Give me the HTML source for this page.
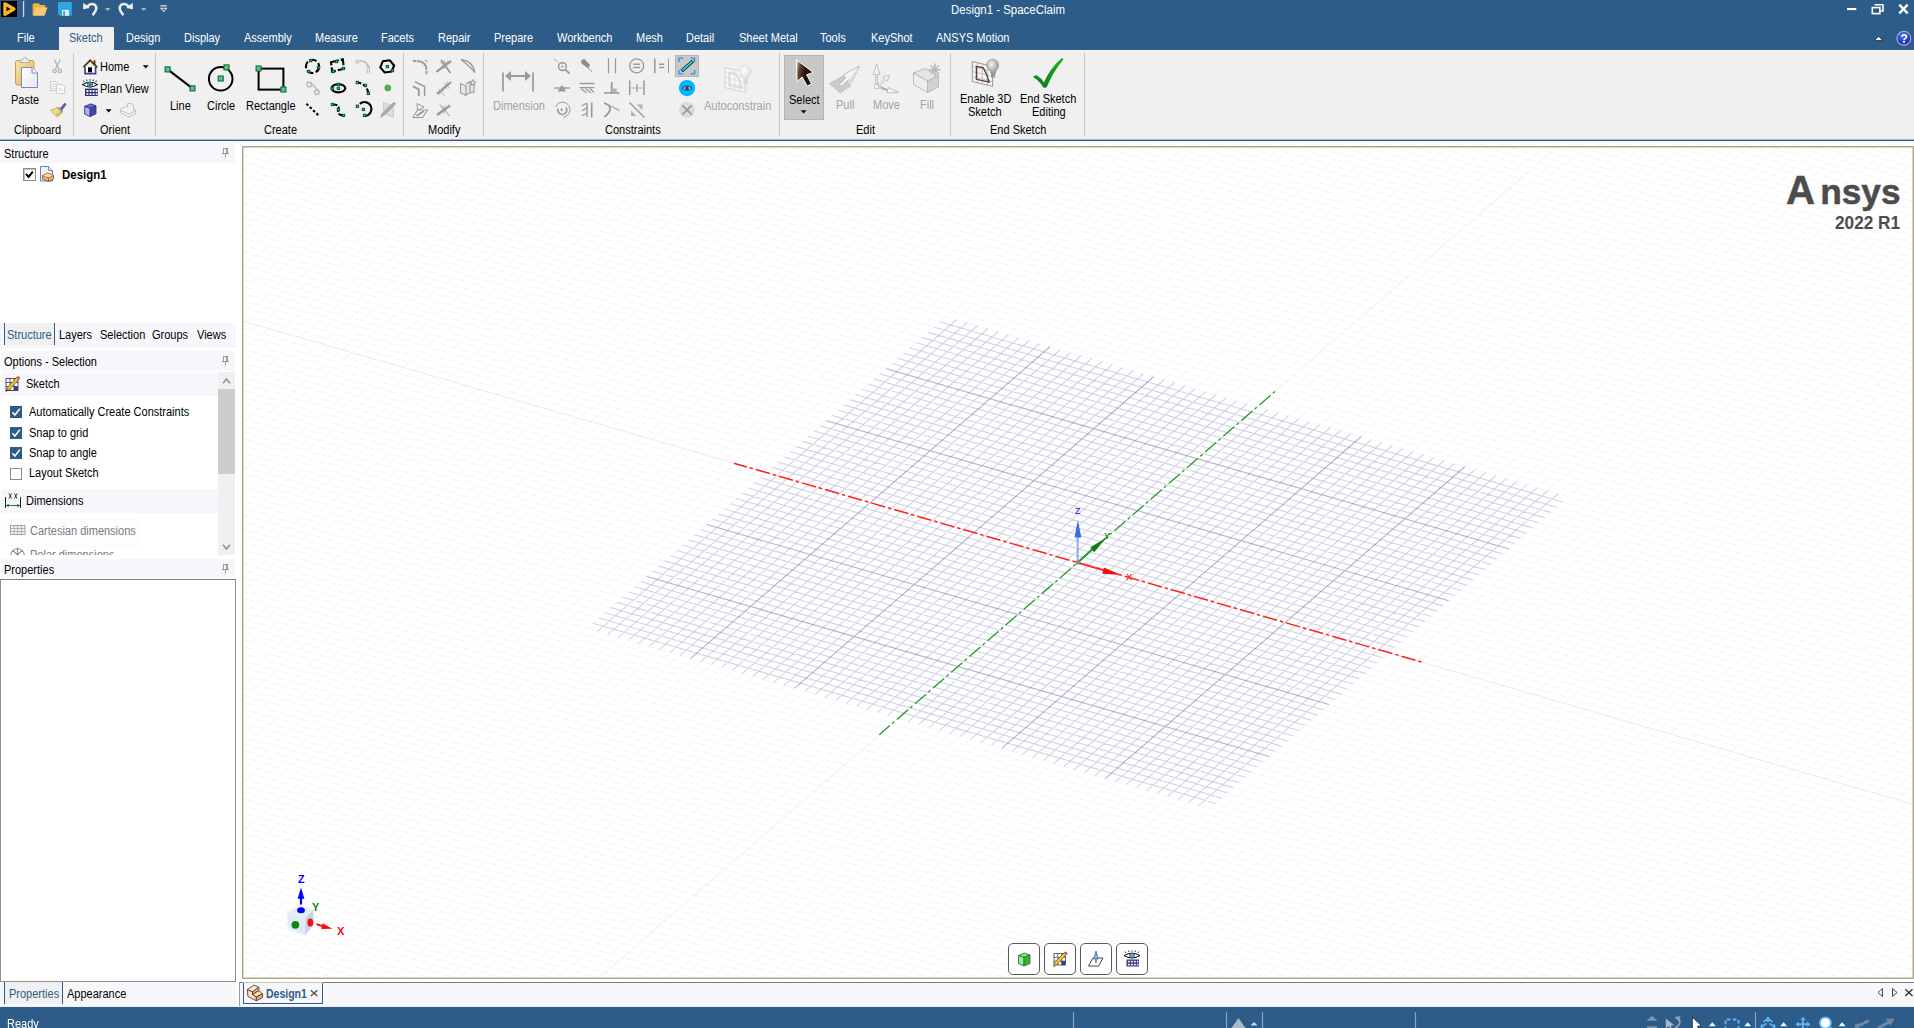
<!DOCTYPE html>
<html lang="en"><head><meta charset="utf-8"><title>Design1 - SpaceClaim</title>
<style>
html,body{margin:0;padding:0;}
body{width:1914px;height:1028px;overflow:hidden;position:relative;background:#fff;font-family:"Liberation Sans",sans-serif;font-size:12px;color:#000;}
.a{position:absolute;}
.t{position:absolute;white-space:nowrap;font-size:12px;line-height:14px;height:14px;transform:scaleX(.917);transform-origin:0 0;}
.w{color:#fff;}
.g{color:#a3a3a3;}
.bl{color:#2D5C88;}
.b{font-weight:bold;}
svg{position:absolute;overflow:visible;}
.sep{position:absolute;width:1px;background:#c6c6c6;top:53px;height:83px;}
.hd{position:absolute;background:#f7f7fb;}
.cb{position:absolute;width:11px;height:11px;border:1px solid #8a8a8a;background:#fff;}
.cbc{position:absolute;width:13px;height:13px;background:#2D5C88;}
.logo::first-letter{font-size:40.500px;letter-spacing:5.200px;}
</style></head>
<body>
<!-- titlebar -->
<div class="a" style="left:0px;top:0px;width:1914px;height:50px;background:#2D5C88;"></div>
<div class="a" style="left:59px;top:27px;width:55px;height:23px;background:#f0f0f0;"></div>
<div class="t w" style="left:951px;top:3px;transform:scaleX(0.955);font-size:12px;">Design1 - SpaceClaim</div>
<div class="t w" style="left:17px;top:31px;">File</div>
<div class="t bl" style="left:69px;top:31px;">Sketch</div>
<div class="t w" style="left:126px;top:31px;">Design</div>
<div class="t w" style="left:184px;top:31px;">Display</div>
<div class="t w" style="left:244px;top:31px;">Assembly</div>
<div class="t w" style="left:315px;top:31px;">Measure</div>
<div class="t w" style="left:381px;top:31px;">Facets</div>
<div class="t w" style="left:438px;top:31px;">Repair</div>
<div class="t w" style="left:494px;top:31px;">Prepare</div>
<div class="t w" style="left:557px;top:31px;">Workbench</div>
<div class="t w" style="left:636px;top:31px;">Mesh</div>
<div class="t w" style="left:686px;top:31px;">Detail</div>
<div class="t w" style="left:739px;top:31px;">Sheet Metal</div>
<div class="t w" style="left:820px;top:31px;">Tools</div>
<div class="t w" style="left:871px;top:31px;">KeyShot</div>
<div class="t w" style="left:936px;top:31px;">ANSYS Motion</div>
<svg style="left:0px;top:0px" width="200" height="20" viewBox="0 0 200 20">
<rect x="1" y="1" width="16" height="16" fill="#000"/>
<path d="M4.900 3.800 L13.900 9 L4.900 14.200 Z" fill="#000" stroke="#F9B61E" stroke-width="3.300" stroke-linejoin="round"/>
<rect x="22.900" y="1" width="1.300" height="16" fill="#d2dae3"/>
<path d="M32.600 15.500 V5 q0-1.800 1.800-1.800 h3.600 q1 0 1.500 0.800 l0.700 1 h4.300 q0.900 0 0.900 0.900 V8.500 H36 Z" fill="#F6AE3E"/>
<path d="M32.800 15.700 L35.600 7.600 H47.400 L44.600 15.700 Z" fill="#FCCB70"/>
<path d="M58 2.100 H71.800 V15.700 H59.800 L58 13.900 Z" fill="#2AA9E2"/>
<rect x="62" y="9.900" width="7" height="5.800" fill="#e9eef2"/>
<rect x="63.200" y="11.200" width="1.800" height="4.500" fill="#1f9fdc"/>
<path d="M86.800 6.900 Q90.500 2.700 94.600 4.600 Q98.800 8.200 92.600 15.200" fill="none" stroke="#ECECEC" stroke-width="2.500"/>
<path d="M83.400 2.700 L83 9.300 L89.900 8 Z" fill="#ECECEC"/>
<path d="M105 8 H110.400 L107.700 11 Z" fill="#A9B4C0"/>
<path d="M129.200 6.900 Q125.500 2.700 121.400 4.600 Q117.200 8.200 123.400 15.200" fill="none" stroke="#ECECEC" stroke-width="2.500"/>
<path d="M132.600 2.700 L133 9.300 L126.100 8 Z" fill="#ECECEC"/>
<path d="M141 8 H146.400 L143.700 11 Z" fill="#A9B4C0"/>
<rect x="160.600" y="5.200" width="6.200" height="1.300" fill="#DADFE6"/>
<path d="M161 8.300 H166.400 L163.700 11.500 Z" fill="#1d3b58" stroke="#DADFE6" stroke-width="1.100"/>
</svg>
<svg style="left:0px;top:0px" width="1914" height="50" viewBox="0 0 1914 50">
<rect x="1847" y="8" width="9.300" height="2.100" fill="#fff"/>
<path d="M1874.5 4.8 H1883 V11 H1880.4" fill="none" stroke="#fff" stroke-width="1.6"/>
<rect x="1872.3" y="7.6" width="7.6" height="6" fill="none" stroke="#fff" stroke-width="1.6"/>
<path d="M1899.3 4.6 L1907.7 13.4 M1907.7 4.6 L1899.3 13.4" stroke="#fff" stroke-width="2.3" fill="none"/>
<path d="M1874.4 40.6 L1878.6 36.2 L1882.8 40.6 Z" fill="#fff" stroke="#3a3a3a" stroke-width="1" stroke-linejoin="round"/>
<defs><radialGradient id="hg" cx="0.4" cy="0.3" r="0.8"><stop offset="0" stop-color="#5a7be8"/><stop offset="0.6" stop-color="#1d3cc0"/><stop offset="1" stop-color="#0a1c80"/></radialGradient></defs>
<circle cx="1903.800" cy="38.200" r="6.900" fill="url(#hg)" stroke="#a9b9d6" stroke-width="1.100"/>
</svg>
<div class="t w b" style="left:1900.6px;top:32px;transform:scaleX(1);font-size:12px;">?</div>
<!-- ribbon -->
<div class="a" style="left:0px;top:50px;width:1914px;height:90px;background:#f0f0f0;"></div>
<div class="a" style="left:0px;top:50px;width:1914px;height:1px;background:#f8f6f5;"></div>
<div class="a" style="left:59px;top:50px;width:55px;height:1px;background:#f0f0f0;"></div>
<div class="a" style="left:0px;top:139px;width:1914px;height:1px;background:#a9b9cb;"></div>
<div class="a" style="left:0px;top:140px;width:1914px;height:1px;background:#2D5C88;"></div>
<div class="a" style="left:0px;top:141px;width:1914px;height:2px;background:#f6f6fb;"></div>
<div class="sep" style="left:73px"></div>
<div class="sep" style="left:155px"></div>
<div class="sep" style="left:403px"></div>
<div class="sep" style="left:483px"></div>
<div class="sep" style="left:779px"></div>
<div class="sep" style="left:950px"></div>
<div class="sep" style="left:1084px"></div>
<div class="a" style="left:784px;top:55px;width:40px;height:65px;background:#c8c8c8;box-sizing:border-box;border:1px solid #b4b4b4;"></div>
<div class="a" style="left:675px;top:55px;width:24px;height:22px;background:#c8c8c8;box-sizing:border-box;border:1px solid #b4b4b4;"></div>
<svg style="left:0px;top:0px" width="1914" height="145" viewBox="0 0 1914 145"><defs>
<linearGradient id="cbg" x1="0" y1="0" x2="1" y2="1"><stop offset="0" stop-color="#f9e3a8"/><stop offset="1" stop-color="#e7b35c"/></linearGradient>
<linearGradient id="pgg" x1="0" y1="0" x2="1" y2="1"><stop offset="0" stop-color="#ffffff"/><stop offset="1" stop-color="#e3e6f6"/></linearGradient>
<linearGradient id="ckg" x1="0" y1="0" x2="0" y2="1"><stop offset="0" stop-color="#22b422"/><stop offset="1" stop-color="#0f7a1c"/></linearGradient>
<linearGradient id="arg" x1="0" y1="0" x2="1" y2="0.3"><stop offset="0" stop-color="#fff"/><stop offset="0.25" stop-color="#6a4a3c"/><stop offset="0.6" stop-color="#2a1208"/></linearGradient>
<radialGradient id="bulb" cx="0.4" cy="0.35" r="0.7"><stop offset="0" stop-color="#f4f4f4"/><stop offset="1" stop-color="#8a8a8a"/></radialGradient>
<radialGradient id="bulbg" cx="0.4" cy="0.35" r="0.7"><stop offset="0" stop-color="#ffffff"/><stop offset="1" stop-color="#d8d8d8"/></radialGradient>
</defs>
<rect x="15.5" y="60.5" width="18.5" height="24.5" rx="2" fill="url(#cbg)" stroke="#cf9a4e"/>
<path d="M20 62.5 V60 h2.6 q0.3-2.6 2.2-2.6 q1.9 0 2.2 2.6 H29.6 V62.5 Z" fill="#efefef" stroke="#a9a9a9" stroke-width="0.9"/>
<path d="M21.5 67.5 H32 L37.5 73 V87.5 H21.5 Z" fill="url(#pgg)" stroke="#7d8cb4" stroke-width="1"/>
<path d="M32 67.5 V73 H37.5" fill="#f4f5fb" stroke="#7d8cb4" stroke-width="1"/>
<g fill="none" stroke="#b4b4b4" stroke-width="1.3"><path d="M54.3 59.5 L59.2 69.5 M60.2 59.5 L55.3 69.5"/><circle cx="54.6" cy="71" r="1.7"/><circle cx="59.9" cy="71" r="1.7"/></g>
<g stroke="#cfcfcf" stroke-width="1" fill="#f4f4f4"><path d="M50.5 81.5 H56 L58.5 84 V90.5 H50.5 Z"/><path d="M56.5 84.5 H62 L64.5 87 V93.5 H56.5 Z" fill="#fafafa"/></g>
<path d="M52 84.5h4 M52 86.500h5 M52 88.5h4 M58 88.500h4 M58 90.500h5" stroke="#d6d6d6" stroke-width="0.8"/>
<path d="M60.2 108.6 L64.4 103.4 Q65.8 102.8 66 104.6 L62 110 Z" fill="#5c5cb4" stroke="#3c3c90" stroke-width="0.6"/>
<path d="M57 107.5 L60.4 108.2 L62.4 110.6 L62 113 Z" fill="#9a9a9a" stroke="#666" stroke-width="0.6"/>
<path d="M50.4 110.4 L57.2 107.6 L62 113 L57.4 116.8 Q53 113.6 50.4 110.4 Z" fill="#eadf86" stroke="#b7a64a" stroke-width="0.7"/>
<path d="M55 114.5 L57.4 116.8 L62 113 L60 111.4 Z" fill="#c9b85a" opacity="0.7"/>
<rect x="93.6" y="60.3" width="1.8" height="4.4" fill="#7c1212"/>
<path d="M85 67 V73.6 H95.6 V67" fill="#fff" stroke="#3e3ea0" stroke-width="1.7"/>
<rect x="88" y="67.3" width="4" height="5" fill="#000"/>
<path d="M83.4 67.2 L90.2 60.4 L97.2 67.4" fill="none" stroke="#45450f" stroke-width="1.9" stroke-linejoin="miter"/>
<path d="M142.8 65.2 H148.6 L145.7 68.4 Z" fill="#000"/>
<path d="M82.6 84.6 Q90 79.8 97.4 84.6 Q90 89.4 82.6 84.6 Z" fill="#fff" stroke="#000" stroke-width="1.1"/>
<circle cx="90" cy="84.6" r="2.5" fill="#5fb4c8" stroke="#1e5a6e" stroke-width="0.9"/><circle cx="90" cy="84.600" r="0.9" fill="#103040"/>
<path d="M84.4 82 L83.4 80.6 M87 81 L86.6 79.6 M90 80.600 V79.2 M93 81 L93.400 79.6 M95.6 82 L96.6 80.6" stroke="#000" stroke-width="0.9"/>
<rect x="85" y="88.600" width="12.8" height="7.4" fill="#2f2f72"/>
<path d="M86.4 90 h2v2h-2z m3.1 0 h2v2h-2z m3.1 0 h2v2h-2z m3.1 0 h1.600v2h-1.600z M86.4 93.200 h2v1.800h-2z m3.1 0 h2v1.800h-2z m3.1 0 h2v1.800h-2z m3.1 0 h1.600v1.800h-1.600z" fill="#eef"/>
<path d="M84.6 106.4 L90.8 103.800 L96 105.800 L90.2 108.4 Z" fill="#6a6acc" stroke="#2a2a80" stroke-width="0.8"/>
<path d="M84.600 106.4 L90.2 108.4 V116.600 L84.600 114 Z" fill="#b0b0f4" stroke="#2a2a80" stroke-width="0.8"/>
<path d="M90.200 108.4 L96 105.800 V113.800 L90.200 116.600 Z" fill="#4545a8" stroke="#2a2a80" stroke-width="0.8"/>
<path d="M105.800 109.200 H111.600 L108.700 112.400 Z" fill="#000"/>
<g fill="#f2f2f2" stroke="#c2c2c2" stroke-width="1"><path d="M120.500 109 L127 106 L135.500 110 V114 L129 117 L120.500 113 Z"/><path d="M127.500 107.500 V103.500 H131 L133.500 105.500 V110.500"/><path d="M120.500 110.500 L129 114 L135.500 111"/></g>
<path d="M167.600 69.400 L192.500 88.400" stroke="#000" stroke-width="2"/><rect x="165.1" y="66.9" width="5" height="5" fill="#5fc184" stroke="#0b6a3c" stroke-width="1.1"/><rect x="190.0" y="85.9" width="5" height="5" fill="#5fc184" stroke="#0b6a3c" stroke-width="1.1"/>
<circle cx="220.700" cy="78.800" r="11.800" fill="none" stroke="#000" stroke-width="2"/><rect x="224.0" y="64.9" width="5" height="5" fill="#5fc184" stroke="#0b6a3c" stroke-width="1.1"/><rect x="218.2" y="76.0" width="5" height="5" fill="#5fc184" stroke="#0b6a3c" stroke-width="1.1"/>
<rect x="258.600" y="68.600" width="24.800" height="21" fill="none" stroke="#000" stroke-width="2"/><rect x="256.1" y="66.0" width="5" height="5" fill="#5fc184" stroke="#0b6a3c" stroke-width="1.1"/><rect x="280.9" y="87.0" width="5" height="5" fill="#5fc184" stroke="#0b6a3c" stroke-width="1.1"/>
<circle cx="312.500" cy="66.400" r="6.600" fill="none" stroke="#000" stroke-width="2.100" stroke-dasharray="7 2.400"/><rect x="309.55" y="59.45" width="2.300" height="2.300" fill="#4fb878" stroke="#0b5a30" stroke-width="1"/><rect x="317.45" y="66.45" width="2.300" height="2.300" fill="#4fb878" stroke="#0b5a30" stroke-width="1"/><rect x="307.45" y="70.35" width="2.300" height="2.300" fill="#4fb878" stroke="#0b5a30" stroke-width="1"/>
<path d="M331 62.200 L342.800 59.400 L344 68.800 L332.200 71.600 Z" fill="none" stroke="#000" stroke-width="2.100" stroke-dasharray="8 2"/><rect x="335.35" y="60.35" width="2.300" height="2.300" fill="#4fb878" stroke="#0b5a30" stroke-width="1"/><rect x="342.35" y="67.35" width="2.300" height="2.300" fill="#4fb878" stroke="#0b5a30" stroke-width="1"/><rect x="332.25" y="70.35" width="2.300" height="2.300" fill="#4fb878" stroke="#0b5a30" stroke-width="1"/>
<g fill="none" stroke="#b9b9b9"><rect x="356" y="60.300" width="2.600" height="2.600" stroke-width="0.9"/><path d="M359.500 61 Q368 60.600 368.200 68" stroke-width="1.700"/><path d="M367.200 68.500 V73 M369.400 66.500 V73" stroke-width="1" /></g>
<polygon points="394.1,65.5 391.5,71.6 384.6,72.5 380.3,67.3 382.9,61.2 389.8,60.3" fill="none" stroke="#000" stroke-width="2.100"/><rect x="386.25" y="65.45" width="2.300" height="2.300" fill="#4fb878" stroke="#0b5a30" stroke-width="1"/><rect x="391.35" y="69.35" width="2.300" height="2.300" fill="#4fb878" stroke="#0b5a30" stroke-width="1"/>
<g fill="none" stroke="#b9b9b9" stroke-width="1.500"><circle cx="309.200" cy="84.600" r="2.300"/><circle cx="316.800" cy="92.300" r="2.300"/><path d="M310.800 83 L318.300 90.500"/></g>
<ellipse cx="338.400" cy="88.300" rx="6.900" ry="4.100" fill="none" stroke="#000" stroke-width="2.100"/><rect x="337.25" y="83.25" width="2.300" height="2.300" fill="#4fb878" stroke="#0b5a30" stroke-width="1"/><rect x="331.25" y="87.25" width="2.300" height="2.300" fill="#4fb878" stroke="#0b5a30" stroke-width="1"/><rect x="337.25" y="87.25" width="2.300" height="2.300" fill="#4fb878" stroke="#0b5a30" stroke-width="1"/>
<path d="M357.400 82.500 Q366.500 83.500 368.400 93.400" fill="none" stroke="#000" stroke-width="2.100" stroke-dasharray="4 1.800"/><rect x="356.25" y="81.35" width="2.300" height="2.300" fill="#4fb878" stroke="#0b5a30" stroke-width="1"/><rect x="364.35" y="84.25" width="2.300" height="2.300" fill="#4fb878" stroke="#0b5a30" stroke-width="1"/><rect x="367.25" y="92.25" width="2.300" height="2.300" fill="#4fb878" stroke="#0b5a30" stroke-width="1"/>
<circle cx="387.800" cy="87.900" r="2.900" fill="#55b848" stroke="#2e8a2e" stroke-width="0.8"/>
<path d="M306.400 103.800 L319.200 116" stroke="#000" stroke-width="2.100" stroke-dasharray="2.600 2" fill="none"/>
<path d="M332.400 104.500 Q340 104 338.400 109.600 Q337 115.400 343.500 115.400" fill="none" stroke="#000" stroke-width="2.100" stroke-dasharray="5 1.800"/><rect x="331.25" y="103.35" width="2.300" height="2.300" fill="#4fb878" stroke="#0b5a30" stroke-width="1"/><rect x="337.25" y="108.45" width="2.300" height="2.300" fill="#4fb878" stroke="#0b5a30" stroke-width="1"/><rect x="342.35" y="114.25" width="2.300" height="2.300" fill="#4fb878" stroke="#0b5a30" stroke-width="1"/>
<path d="M359.800 103.900 A7 7 0 1 1 365.600 116" fill="none" stroke="#000" stroke-width="2.100"/><rect x="356.25" y="105.15" width="2.300" height="2.300" fill="#4fb878" stroke="#0b5a30" stroke-width="1"/><rect x="362.25" y="108.25" width="2.300" height="2.300" fill="#4fb878" stroke="#0b5a30" stroke-width="1"/><rect x="363.35" y="114.25" width="2.300" height="2.300" fill="#4fb878" stroke="#0b5a30" stroke-width="1"/>
<path d="M383.500 102.500 L393.500 106 V117.500 L383.500 113.500 Z" fill="#dcdcdc" stroke="#c4c4c4" stroke-width="0.8"/>
<path d="M380.500 117.300 L382.200 113.200 L393.300 102.600 Q395.200 102 395.600 104 L384.600 115 Z" fill="#ababab" stroke="#9a9a9a" stroke-width="0.6"/>
<g fill="none" stroke="#9a9a9a">
<path d="M413 61 H416.300" stroke-width="2"/><path d="M417 61 Q426.400 61.300 426.400 70" stroke-width="1.800"/><path d="M426.400 71 V74.300" stroke-width="2"/><path d="M424.500 60.500 L427 60.500 L427 63" stroke-width="0.700"/>
<path d="M436.500 71.800 L451 61" stroke-width="2.300"/><path d="M441 60 L450.500 73" stroke-width="1.900"/><path d="M440.500 62.500 L447.500 67.500 M444.500 60.500 L444 69 M448 61.500 L441.500 66.500" stroke-width="0.800"/>
<path d="M461 59.500 Q473 61 475 72.500 M461 59.500 Q470 66.500 475 72.500" stroke-width="1.400"/>
<path d="M415 81.800 L424.600 86.500 V96" stroke-width="1.500"/><path d="M413 86.300 L418.800 89.300 V96" stroke-width="1.900"/>
<path d="M437 94 L451 82" stroke-width="2.100"/><path d="M438.500 89 L444.500 95.500 M444 83 L450 88.500 M447.500 81.500 L446 89 M439.500 94.500 L442.500 87.500 M443 86.500 L449.500 85 M438 91.500 L444 90.500" stroke-width="0.800"/>
<path d="M460.500 83.500 L466 86 V95.500 L460.500 93 Z M466 84 L470 81.500 V92.500 L466 95 M470 84 L474 82.500 V92 L470 93" stroke-width="1.100" fill="#e6e6e6"/>
<path d="M473 79.500 l0.900 2 2.100 0.300 -1.600 1.400 0.400 2.100 -1.800 -1.100 -1.800 1.100 0.400 -2.100 -1.600 -1.400 2.100 -0.300z" stroke-width="0.900" fill="#ddd"/>
<path d="M413 117.500 L417.500 110 L427.500 110 L422.500 117.500 Z" stroke-width="1.100" fill="#f6f6f6"/><path d="M417 103.500 L424 107 L417.500 110.500 Z" stroke-width="1"/><path d="M416.500 115.800 L424 111" stroke-width="2"/>
<path d="M437 115 L450 105.500" stroke-width="2.400"/><path d="M440 104.500 L449.500 116" stroke-width="1"/><path d="M441 107 L447 112.500 M444.500 105.500 L443.500 114 M447.500 107 L440.500 112" stroke-width="0.700"/>
</g>
<g stroke="#9a9a9a" fill="#9a9a9a"><path d="M503 72.600 V91.600 M533 72.600 V91.600" stroke-width="1.700"/><path d="M508 76 H528" stroke-width="2"/><path d="M505 76 L511 71 V81 Z M531 76 L525 71 V81 Z" stroke="none"/></g>
<g fill="none" stroke="#9a9a9a" stroke-width="1.500">
<circle cx="562.400" cy="66.600" r="3.900"/><path d="M565.300 69.600 L569.500 73.500" stroke-width="1.800"/><path d="M554.300 58.500 L558 62.300" stroke-width="0.9"/><path d="M560.700 66.600 h3.400 M562.400 64.900 v3.400" stroke-width="0.6"/>
<path d="M580.500 61 L584 58.800 L590.200 65 L588 68.500 Z" fill="#8e8e8e" stroke="none"/><path d="M581.500 62.500 L588.500 67.500" stroke-width="1.600" stroke="#8e8e8e"/><path d="M587 67 L592 71.500" stroke-width="1"/>
<path d="M608.500 58.200 V73.500 M615.500 58.200 V73.500" stroke-width="1.300"/>
<circle cx="636.700" cy="65.800" r="7"  stroke-width="1.300"/><path d="M633.200 64.200 h7 M633.200 67.600 h7" stroke-width="1.500"/>
<path d="M654.800 58.400 V73.200" stroke-width="1.600"/><path d="M668.500 58.400 V73.200" stroke-width="1"/><path d="M659 64.200 h5.200 M659 67.600 h5.200" stroke-width="1.500"/>
<path d="M554 88 H570" stroke-width="1.400"/><path d="M557.500 91.400 L562 84.800 L566 91.400 Z" fill="#9a9a9a" stroke="none"/>
<path d="M579.500 83.500 H594.500 M579.500 87.600 H594.500" stroke-width="1.300"/><path d="M581 88.500 L586.500 93 M585.500 88.500 L591 93 M590 88.500 L594 92.500" stroke-width="1.200"/>
<path d="M604 93 H619.500" stroke-width="1.600"/><path d="M611.700 82 V93" stroke-width="1.800"/><rect x="612.700" y="88.500" width="4" height="4" fill="#b4b4b4" stroke="none"/>
<path d="M629.700 80.500 V95 M644 80.500 V95" stroke-width="1.500"/><path d="M636.900 84.500 V91.500" stroke-width="1.500"/><path d="M631.500 88 h4 M638.500 88 h4" stroke-width="0.8"/>
<path d="M555.500 107 A7.500 7.500 0 1 1 563 117.200" stroke-width="1"/><path d="M558 108.500 A4.500 4.500 0 1 0 566 107.500" stroke-width="1.600"/><circle cx="561.700" cy="109.800" r="0.500"/>
<path d="M591.700 102.500 V117.500" stroke-width="1.600"/><path d="M587 103.500 V117" stroke-width="1.400"/><path d="M582 105.800 L587 103 M582 110.800 L587 108 M582 115.800 L587 113" stroke-width="1.300"/>
<path d="M604 103 Q616 107 604.500 117" stroke-width="1.800"/><path d="M605 103.200 L619.500 110.500" stroke-width="1.100"/>
<path d="M629.500 102.500 L644.500 117.500" stroke-width="1.400"/><path d="M636.500 104.500 H642.500 V110 Z M631 110.500 V116 H636.500 Z" fill="#b0b0b0" stroke="none"/>
</g>
<path d="M681.700 70.900 L692.900 60.900" stroke="#223" stroke-width="3.400" stroke-linecap="butt"/><path d="M682.300 70.400 L692.300 61.400" stroke="#18e0e0" stroke-width="1.800"/>
<path d="M679 62 V58.200 H683 M690.600 58.200 H694.600 V62 M694.600 70 V73.800 H690.600 M683 73.800 H679 V70" fill="none" stroke="#2196e8" stroke-width="1.300"/>
<circle cx="687" cy="88.100" r="8.100" fill="#00b6ff"/><path d="M682 88.200 Q687 84.200 692 88.200 Q687 92.200 682 88.200 Z" fill="#9adfff" stroke="#243c4c" stroke-width="1"/><circle cx="687" cy="88.200" r="1.700" fill="#243c4c"/>
<circle cx="687" cy="110" r="8.100" fill="#dcdcdc"/><path d="M682.300 105.300 L691.700 114.700 M691.700 105.300 L682.300 114.700" stroke="#9a9a9a" stroke-width="1.700"/>
<g transform="translate(724.5,65)"><path d="M0.500 2.500 L20.800 7.400 V27.300 L0.500 22.600 Z" fill="#f6f6f6" stroke="#cdcdcd" stroke-width="0.9"/>
<path d="M5.500 3.700 V23.800 M10.500 4.900 V24.900 M15.500 6.100 V26.100 M0.500 7.500 L20.800 12.400 M0.500 12.500 L20.800 17.400 M0.500 17.500 L20.800 22.400" stroke="#cdcdcd" stroke-width="0.500" fill="none"/>
<path d="M4.600 7.400 L11.500 8.900 Q15 15 17.500 23.200 L4.600 20.300 Z" fill="none" stroke="#d6d6d6" stroke-width="1.300"/>
<path d="M14.800 6.500 a6 6 0 1 1 10.400 3.800 q-1.600 2 -1.800 4.500 h-4.200 q-0.200 -2.600 -2 -4.600 a6 6 0 0 1 -2.400 -3.700z" fill="url(#bulbg)" stroke="#d4d4d4" stroke-width="0.600"/>
<rect x="19.200" y="15" width="4.200" height="3.600" fill="#d4d4d4" opacity="0.8"/></g>
<g transform="translate(971.8,59)"><path d="M0.500 2.500 L20.800 7.400 V27.300 L0.500 22.600 Z" fill="#f6f6f6" stroke="#8e8e8e" stroke-width="0.9"/>
<path d="M5.500 3.700 V23.800 M10.500 4.900 V24.900 M15.500 6.100 V26.100 M0.500 7.500 L20.800 12.400 M0.500 12.500 L20.800 17.400 M0.500 17.500 L20.800 22.400" stroke="#8e8e8e" stroke-width="0.500" fill="none"/>
<path d="M4.600 7.400 L11.500 8.900 Q15 15 17.500 23.200 L4.600 20.300 Z" fill="none" stroke="#5a3a2a" stroke-width="1.300"/>
<path d="M14.800 6.500 a6 6 0 1 1 10.400 3.800 q-1.600 2 -1.800 4.500 h-4.200 q-0.200 -2.600 -2 -4.600 a6 6 0 0 1 -2.400 -3.700z" fill="url(#bulb)" stroke="#8a8a8a" stroke-width="0.600"/>
<rect x="19.200" y="15" width="4.200" height="3.600" fill="#8a8a8a" opacity="0.8"/></g>
<path d="M796.200 59.600 L813.300 72.400 L806.700 74.700 L811.500 83.800 L807.300 86.200 L802.200 77 L797.100 81.500 Z" fill="url(#arg)" stroke="#fff" stroke-width="1" stroke-linejoin="round"/>
<path d="M800.700 110.200 H806.500 L803.600 113.400 Z" fill="#000"/>
<path d="M829.500 83.500 L843 76 L851 85.500 L840 93 Z" fill="#cacaca" stroke="#bcbcbc" stroke-width="0.700"/>
<path d="M859.500 66 L851.500 82.500 L848.500 79.800 L841.500 86.500 L839.500 84.500 L846 77.500 L843 75 Z" fill="#f4f4f4" stroke="#b8b8b8" stroke-width="0.900" stroke-linejoin="round"/><path d="M859.500 66 L851.500 82.500 L848.500 79.800 Z" fill="#d8d8d8" opacity="0.7"/>
<g fill="#f4f4f4" stroke="#b8b8b8" stroke-width="0.900"><path d="M875.800 84 V74.500 h-2.600 L876.600 64 L880 74.500 h-2.600 V84 Z"/><path d="M878 85 L884.500 78.500 l-1.600 -1.500 L889.500 75 L887 81.500 l-1.500 -1.600 L879.300 86.500 Z"/><path d="M879 86 L888 89.500 l0.600 -2 L898.500 92.500 L887 93 l0.600 -2 L878.500 88 Z"/><circle cx="876.500" cy="86.500" r="2.300"/></g><path d="M880.500 87.200 L888 90.300" stroke="#a8a8a8" stroke-width="1.200"/>
<g stroke="#b4b4b4" stroke-width="0.900"><path d="M913.500 73 L925 68.500 L938.500 75.500 L927.500 81 Z" fill="#e4e4e4"/><path d="M913.500 73 L927.500 81 V92.500 L913.500 84.500 Z" fill="#eeeeee"/><path d="M927.500 81 L938.500 75.500 V87 L927.500 92.500 Z" fill="#d2d2d2"/></g>
<path d="M934.800 63.500 V76 M928.800 69.800 H940.800 M930.500 65.500 L939 74 M939 65.500 L930.500 74" stroke="#b9b9b9" stroke-width="1.600"/>
<path d="M1033 77 Q1035 74.500 1037.500 75.800 Q1041.500 78.500 1044 82.500 Q1050 68 1061.500 58.200 Q1063.500 57.600 1063.200 59.800 Q1053 72 1047 86.500 Q1045.500 88.500 1043.500 87.400 Q1039 80.500 1033 77 Z" fill="url(#ckg)"/></svg>
<div class="t" style="left:14px;top:123px;">Clipboard</div>
<div class="t" style="left:100px;top:123px;">Orient</div>
<div class="t" style="left:264px;top:123px;">Create</div>
<div class="t" style="left:428px;top:123px;">Modify</div>
<div class="t" style="left:605px;top:123px;">Constraints</div>
<div class="t" style="left:856px;top:123px;">Edit</div>
<div class="t" style="left:990px;top:123px;">End Sketch</div>
<div class="t" style="left:11px;top:93px;">Paste</div>
<div class="t" style="left:100px;top:60px;">Home</div>
<div class="t" style="left:100px;top:82px;">Plan View</div>
<div class="t" style="left:170px;top:99px;">Line</div>
<div class="t" style="left:207px;top:99px;">Circle</div>
<div class="t" style="left:246px;top:99px;">Rectangle</div>
<div class="t g" style="left:492.5px;top:99px;">Dimension</div>
<div class="t g" style="left:704px;top:99px;">Autoconstrain</div>
<div class="t" style="left:789px;top:93px;">Select</div>
<div class="t g" style="left:835.5px;top:98px;">Pull</div>
<div class="t g" style="left:873px;top:98px;">Move</div>
<div class="t g" style="left:919.5px;top:98px;">Fill</div>
<div class="t" style="left:960px;top:92px;">Enable 3D</div>
<div class="t" style="left:968px;top:105px;">Sketch</div>
<div class="t" style="left:1020px;top:92px;">End Sketch</div>
<div class="t" style="left:1032px;top:105px;">Editing</div>
<!-- left -->
<div class="a" style="left:1px;top:143px;width:234px;height:20px;background:#f7f7fb;"></div>
<div class="t" style="left:4px;top:147px;">Structure</div>
<div class="a" style="left:23px;top:168px;width:13px;height:13px;background:#fff;box-sizing:border-box;border:1px solid #8c8c8c;box-shadow:inset 1px 1px 0 #c4c4c4;"></div>
<div class="t b" style="left:61.5px;top:168px;transform:scaleX(0.955);">Design1</div>
<div class="a" style="left:0px;top:323px;width:236px;height:25px;background:#f7f7fb;"></div>
<div class="a" style="left:4px;top:323px;width:51px;height:22px;background:#f0f0f0;box-sizing:border-box;border-left:1px solid #2D5C88;border-right:1px solid #2D5C88;"></div>
<div class="t bl" style="left:7px;top:328px;">Structure</div>
<div class="t" style="left:59px;top:328px;">Layers</div>
<div class="t" style="left:100px;top:328px;">Selection</div>
<div class="t" style="left:152px;top:328px;">Groups</div>
<div class="t" style="left:197px;top:328px;">Views</div>
<div class="a" style="left:1px;top:351px;width:234px;height:20px;background:#f7f7fb;"></div>
<div class="t" style="left:4px;top:355px;">Options - Selection</div>
<div class="a" style="left:1px;top:372px;width:217px;height:24px;background:#f7f7fb;"></div>
<div class="t" style="left:26px;top:377px;">Sketch</div>
<div class="a" style="left:218px;top:372px;width:17px;height:183px;background:#f0f0f0;"></div>
<div class="a" style="left:218px;top:389px;width:17px;height:85px;background:#cdcdcd;"></div>
<div class="a" style="left:10px;top:406px;width:12px;height:12px;background:#2D5C88;"></div>
<div class="t" style="left:29px;top:405px;">Automatically Create Constraints</div>
<div class="a" style="left:10px;top:427px;width:12px;height:12px;background:#2D5C88;"></div>
<div class="t" style="left:29px;top:425.5px;">Snap to grid</div>
<div class="a" style="left:10px;top:447px;width:12px;height:12px;background:#2D5C88;"></div>
<div class="t" style="left:29px;top:445.5px;">Snap to angle</div>
<div class="a" style="left:10px;top:467.5px;width:12px;height:12px;background:#fff;box-sizing:border-box;border:1px solid #8a8a8a;"></div>
<div class="t" style="left:29px;top:466px;">Layout Sketch</div>
<div class="a" style="left:1px;top:489px;width:217px;height:24px;background:#f7f7fb;"></div>
<div class="t" style="left:26px;top:494px;">Dimensions</div>
<div class="a" style="left:7px;top:518px;width:132px;height:30px;background:#fdfdff;"></div>
<div class="t" style="left:30px;top:524px;color:#7a7a7a;">Cartesian dimensions</div>
<div class="a" style="left:0;top:540px;width:218px;height:15px;overflow:hidden;"><div class="t" style="left:30px;top:7.500px;color:#7a7a7a;">Polar dimensions</div></div>
<div class="a" style="left:1px;top:559px;width:234px;height:19px;background:#f7f7fb;"></div>
<div class="t" style="left:4px;top:563px;">Properties</div>
<div class="a" style="left:0px;top:579px;width:236px;height:403px;background:#fff;box-sizing:border-box;border:1px solid #8e8e8e;border-top-color:#7a7a7a;"></div>
<div class="a" style="left:0px;top:982px;width:236px;height:25px;background:#f7f7fb;"></div>
<div class="a" style="left:4px;top:982px;width:59px;height:22px;background:#f0f0f0;box-sizing:border-box;border-left:1px solid #2D5C88;border-right:1px solid #2D5C88;"></div>
<div class="t bl" style="left:8.5px;top:987px;">Properties</div>
<div class="t" style="left:67px;top:987px;">Appearance</div>
<div class="a" style="left:239px;top:982px;width:1px;height:24px;background:#9a9a9a;"></div>
<svg style="left:0px;top:0px" width="240" height="1010" viewBox="0 0 240 1010"><rect x="223" y="148" width="1" height="5" fill="#9a9a9a"/><rect x="223" y="148" width="5" height="1" fill="#9a9a9a"/><rect x="226" y="148" width="2" height="5" fill="#9a9a9a"/><rect x="222" y="153" width="7" height="1" fill="#9a9a9a"/><rect x="225" y="154" width="1" height="3" fill="#9a9a9a"/>
<rect x="223" y="356" width="1" height="5" fill="#9a9a9a"/><rect x="223" y="356" width="5" height="1" fill="#9a9a9a"/><rect x="226" y="356" width="2" height="5" fill="#9a9a9a"/><rect x="222" y="361" width="7" height="1" fill="#9a9a9a"/><rect x="225" y="362" width="1" height="3" fill="#9a9a9a"/>
<rect x="223" y="564" width="1" height="5" fill="#9a9a9a"/><rect x="223" y="564" width="5" height="1" fill="#9a9a9a"/><rect x="226" y="564" width="2" height="5" fill="#9a9a9a"/><rect x="222" y="569" width="7" height="1" fill="#9a9a9a"/><rect x="225" y="570" width="1" height="3" fill="#9a9a9a"/>
<path d="M26 174 L28.600 176.900 L32.800 171.600" fill="none" stroke="#000" stroke-width="2"/>
<path d="M40.500 166.500 H48.500 L52.500 170.500 V181 H40.500 Z" fill="#f1f1ec" stroke="#6b7fae" stroke-width="1"/><path d="M48.500 166.500 V170.500 H52.500" fill="#e8ecf6" stroke="#6b7fae" stroke-width="0.9"/>
<path d="M42.500 175.500 L47.500 173 L53.500 175.500 V179 L48.500 181.500 L42.500 179 Z" fill="#e9b77c" stroke="#8a4a1a" stroke-width="0.8"/><path d="M42.500 175.500 L48.500 178 L53.500 175.500 M48.500 178 V181.500" fill="none" stroke="#8a4a1a" stroke-width="0.8"/><path d="M43 175.600 L47.500 173.500 L53 175.600 L48.500 177.600Z" fill="#f6d9b0"/>
<path d="M12.400 412.2 L14.900 415 L19.800 408.8" fill="none" stroke="#fff" stroke-width="1.500"/>
<path d="M12.400 433.2 L14.900 436 L19.800 429.8" fill="none" stroke="#fff" stroke-width="1.500"/>
<path d="M12.400 453.2 L14.900 456 L19.800 449.8" fill="none" stroke="#fff" stroke-width="1.500"/>
<rect x="6" y="378.500" width="12" height="12" fill="#fff" stroke="#3a3a6a" stroke-width="0.9"/><path d="M10 378.500 v12 M14 378.500 v12 M6 382.500 h12 M6 386.500 h12" stroke="#3a3a6a" stroke-width="0.800"/><rect x="14" y="386.500" width="4" height="4" fill="#3a3a8a"/>
<path d="M6 391.500 L7.500 387.500 L17 377 Q19 376 19.800 378.200 L10 389 Z" fill="#f2c62a" stroke="#5a4a10" stroke-width="0.700"/><path d="M17 377 Q19 376 19.800 378.200 L18.600 379.500 L16 377.800 Z" fill="#e05a5a"/><path d="M6 391.500 L6.800 389.300 L8.200 390.500 Z" fill="#222"/>
<path d="M5.500 497 V508 M20.500 497 V508" stroke="#222" stroke-width="1"/><path d="M6 505.500 H20" stroke="#2a7a2a" stroke-width="1"/><path d="M5.800 505.500 l3 -1.800 v3.600z M20.200 505.500 l-3 -1.800 v3.600z" fill="#2a7a2a"/>
<path d="M9 493.500 l2.500 5 M11.500 493.500 l-2.500 5 M14.500 493.500 l2.500 5 M17 493.500 l-2.500 5" stroke="#222" stroke-width="0.900"/>
<rect x="10.500" y="525.500" width="14.500" height="9" fill="#f4f4f4" stroke="#9a9a9a" stroke-width="0.9"/><path d="M14.100 525.500 v9 M17.700 525.500 v9 M21.300 525.500 v9 M10.500 528.500 h14.500 M10.500 531.500 h14.500" stroke="#9a9a9a" stroke-width="0.700"/>
<path d="M10.600 555 A7 7.600 0 0 1 24.400 555 M17.500 547.600 V555 M12.800 550.200 L17.500 555 M22.200 550.200 L17.500 555" fill="none" stroke="#8e8e8e" stroke-width="1.100"/>
<path d="M223.100 383.200 L226.500 378.900 L229.900 383.200 M223.100 544.800 L226.500 549.200 L229.900 544.800" fill="none" stroke="#8a8a8a" stroke-width="1.400"/></svg>
<!-- viewport -->
<div class="a" style="left:242px;top:146px;width:1672px;height:833px;box-sizing:border-box;border:1px solid #aea68a;background:#fff;overflow:hidden;box-shadow:inset 0 0 0 1px #dcd7c3;">
<svg style="left:-243px;top:-147px" width="1914" height="1028" viewBox="0 0 1914 1028"><path d="M242.0 978.7L243.1 979.0M242.0 147.9L244.2 146.0M242.0 971.8L267.0 979.0M242.0 159.9L258.1 146.0M242.0 964.8L291.0 979.0M242.0 171.9L271.9 146.0M242.0 957.9L314.9 979.0M242.0 183.9L285.7 146.0M242.0 951.0L338.8 979.0M242.0 195.9L299.6 146.0M242.0 944.1L362.8 979.0M242.0 207.9L313.4 146.0M242.0 937.1L386.7 979.0M242.0 219.9L327.2 146.0M242.0 930.2L410.6 979.0M242.0 231.9L341.0 146.0M242.0 923.3L434.6 979.0M242.0 243.9L354.9 146.0M242.0 916.4L458.5 979.0M242.0 255.9L368.7 146.0M242.0 909.4L482.5 979.0M242.0 267.9L382.5 146.0M242.0 902.5L506.4 979.0M242.0 279.9L396.4 146.0M242.0 895.6L530.3 979.0M242.0 291.9L410.2 146.0M242.0 888.7L554.3 979.0M242.0 303.9L424.0 146.0M242.0 881.7L578.2 979.0M242.0 315.9L437.8 146.0M242.0 874.8L602.1 979.0M242.0 327.9L451.7 146.0M242.0 867.9L626.1 979.0M242.0 339.9L465.5 146.0M242.0 861.0L650.0 979.0M242.0 351.9L479.3 146.0M242.0 854.0L673.9 979.0M242.0 363.9L493.2 146.0M242.0 847.1L697.9 979.0M242.0 375.9L507.0 146.0M242.0 840.2L721.8 979.0M242.0 387.9L520.8 146.0M242.0 833.3L745.8 979.0M242.0 399.9L534.6 146.0M242.0 826.3L769.7 979.0M242.0 411.9L548.5 146.0M242.0 819.4L793.6 979.0M242.0 423.9L562.3 146.0M242.0 812.5L817.6 979.0M242.0 435.9L576.1 146.0M242.0 805.6L841.5 979.0M242.0 447.9L589.9 146.0M242.0 798.6L865.4 979.0M242.0 459.9L603.8 146.0M242.0 791.7L889.4 979.0M242.0 471.8L617.6 146.0M242.0 784.8L913.3 979.0M242.0 483.8L631.4 146.0M242.0 777.9L937.2 979.0M242.0 495.8L645.3 146.0M242.0 770.9L961.2 979.0M242.0 507.8L659.1 146.0M242.0 764.0L985.1 979.0M242.0 519.8L672.9 146.0M242.0 757.1L1009.1 979.0M242.0 531.8L686.7 146.0M242.0 750.2L1033.0 979.0M242.0 543.8L700.6 146.0M242.0 743.2L1056.9 979.0M242.0 555.8L714.4 146.0M242.0 736.3L1080.9 979.0M242.0 567.8L728.2 146.0M242.0 729.4L1104.8 979.0M242.0 579.8L742.1 146.0M242.0 722.5L1128.7 979.0M242.0 591.8L755.9 146.0M242.0 715.5L1152.7 979.0M242.0 603.8L769.7 146.0M242.0 708.6L1176.6 979.0M242.0 615.8L783.5 146.0M242.0 701.7L1200.6 979.0M242.0 627.8L797.4 146.0M242.0 694.8L1224.5 979.0M242.0 639.8L811.2 146.0M242.0 687.8L1248.4 979.0M242.0 651.8L825.0 146.0M242.0 680.9L1272.4 979.0M242.0 663.8L838.9 146.0M242.0 674.0L1296.3 979.0M242.0 675.8L852.7 146.0M242.0 667.1L1320.2 979.0M242.0 687.8L866.5 146.0M242.0 660.1L1344.2 979.0M242.0 699.8L880.3 146.0M242.0 653.2L1368.1 979.0M242.0 711.8L894.2 146.0M242.0 646.3L1392.0 979.0M242.0 723.8L908.0 146.0M242.0 639.4L1416.0 979.0M242.0 735.8L921.8 146.0M242.0 632.4L1439.9 979.0M242.0 747.8L935.7 146.0M242.0 625.5L1463.9 979.0M242.0 759.8L949.5 146.0M242.0 618.6L1487.8 979.0M242.0 771.8L963.3 146.0M242.0 611.7L1511.7 979.0M242.0 783.7L977.1 146.0M242.0 604.7L1535.7 979.0M242.0 795.7L991.0 146.0M242.0 597.8L1559.6 979.0M242.0 807.7L1004.8 146.0M242.0 590.9L1583.5 979.0M242.0 819.7L1018.6 146.0M242.0 584.0L1607.5 979.0M242.0 831.7L1032.4 146.0M242.0 577.1L1631.4 979.0M242.0 843.7L1046.3 146.0M242.0 570.1L1655.3 979.0M242.0 855.7L1060.1 146.0M242.0 563.2L1679.3 979.0M242.0 867.7L1073.9 146.0M242.0 556.3L1703.2 979.0M242.0 879.7L1087.8 146.0M242.0 549.4L1727.2 979.0M242.0 891.7L1101.6 146.0M242.0 542.4L1751.1 979.0M242.0 903.7L1115.4 146.0M242.0 535.5L1775.0 979.0M242.0 915.7L1129.2 146.0M242.0 528.6L1799.0 979.0M242.0 927.7L1143.1 146.0M242.0 521.7L1822.9 979.0M242.0 939.7L1156.9 146.0M242.0 514.7L1846.8 979.0M242.0 951.7L1170.7 146.0M242.0 507.8L1870.8 979.0M242.0 963.7L1184.6 146.0M242.0 500.9L1894.7 979.0M242.0 975.7L1198.4 146.0M242.0 494.0L1914.0 977.7M252.0 979.0L1212.2 146.0M242.0 487.0L1914.0 970.7M265.8 979.0L1226.0 146.0M242.0 480.1L1914.0 963.8M279.7 979.0L1239.9 146.0M242.0 473.2L1914.0 956.9M293.5 979.0L1253.7 146.0M242.0 466.3L1914.0 950.0M307.3 979.0L1267.5 146.0M242.0 459.3L1914.0 943.0M321.2 979.0L1281.4 146.0M242.0 452.4L1914.0 936.1M335.0 979.0L1295.2 146.0M242.0 445.5L1914.0 929.2M348.8 979.0L1309.0 146.0M242.0 438.6L1914.0 922.3M362.6 979.0L1322.8 146.0M242.0 431.6L1914.0 915.3M376.5 979.0L1336.7 146.0M242.0 424.7L1914.0 908.4M390.3 979.0L1350.5 146.0M242.0 417.8L1914.0 901.5M404.1 979.0L1364.3 146.0M242.0 410.9L1914.0 894.6M417.9 979.0L1378.2 146.0M242.0 403.9L1914.0 887.6M431.8 979.0L1392.0 146.0M242.0 397.0L1914.0 880.7M445.6 979.0L1405.8 146.0M242.0 390.1L1914.0 873.8M459.4 979.0L1419.6 146.0M242.0 383.2L1914.0 866.9M473.3 979.0L1433.5 146.0M242.0 376.2L1914.0 859.9M487.1 979.0L1447.3 146.0M242.0 369.3L1914.0 853.0M500.9 979.0L1461.1 146.0M242.0 362.4L1914.0 846.1M514.7 979.0L1474.9 146.0M242.0 355.5L1914.0 839.2M528.6 979.0L1488.8 146.0M242.0 348.5L1914.0 832.2M542.4 979.0L1502.6 146.0M242.0 341.6L1914.0 825.3M556.2 979.0L1516.4 146.0M242.0 334.7L1914.0 818.4M570.1 979.0L1530.3 146.0M242.0 327.8L1914.0 811.5M583.9 979.0L1544.1 146.0M242.0 320.8L1914.0 804.5M597.7 979.0L1557.9 146.0M242.0 313.9L1914.0 797.6M611.5 979.0L1571.7 146.0M242.0 307.0L1914.0 790.7M625.4 979.0L1585.6 146.0M242.0 300.1L1914.0 783.8M639.2 979.0L1599.4 146.0M242.0 293.1L1914.0 776.8M653.0 979.0L1613.2 146.0M242.0 286.2L1914.0 769.9M666.9 979.0L1627.1 146.0M242.0 279.3L1914.0 763.0M680.7 979.0L1640.9 146.0M242.0 272.4L1914.0 756.1M694.5 979.0L1654.7 146.0M242.0 265.4L1914.0 749.1M708.3 979.0L1668.5 146.0M242.0 258.5L1914.0 742.2M722.2 979.0L1682.4 146.0M242.0 251.6L1914.0 735.3M736.0 979.0L1696.2 146.0M242.0 244.7L1914.0 728.4M749.8 979.0L1710.0 146.0M242.0 237.7L1914.0 721.4M763.7 979.0L1723.9 146.0M242.0 230.8L1914.0 714.5M777.5 979.0L1737.7 146.0M242.0 223.9L1914.0 707.6M791.3 979.0L1751.5 146.0M242.0 217.0L1914.0 700.7M805.1 979.0L1765.3 146.0M242.0 210.0L1914.0 693.7M819.0 979.0L1779.2 146.0M242.0 203.1L1914.0 686.8M832.8 979.0L1793.0 146.0M242.0 196.2L1914.0 679.9M846.6 979.0L1806.8 146.0M242.0 189.3L1914.0 673.0M860.4 979.0L1820.7 146.0M242.0 182.3L1914.0 666.0M874.3 979.0L1834.5 146.0M242.0 175.4L1914.0 659.1M888.1 979.0L1848.3 146.0M242.0 168.5L1914.0 652.2M901.9 979.0L1862.1 146.0M242.0 161.6L1914.0 645.3M915.8 979.0L1876.0 146.0M242.0 154.6L1914.0 638.3M929.6 979.0L1889.8 146.0M242.0 147.7L1914.0 631.4M943.4 979.0L1903.6 146.0M260.0 146.0L1914.0 624.5M957.2 979.0L1914.0 149.0M283.9 146.0L1914.0 617.6M971.1 979.0L1914.0 161.0M307.9 146.0L1914.0 610.6M984.9 979.0L1914.0 173.0M331.8 146.0L1914.0 603.7M998.7 979.0L1914.0 185.0M355.7 146.0L1914.0 596.8M1012.6 979.0L1914.0 197.0M379.7 146.0L1914.0 589.9M1026.4 979.0L1914.0 209.0M403.6 146.0L1914.0 582.9M1040.2 979.0L1914.0 221.0M427.6 146.0L1914.0 576.0M1054.0 979.0L1914.0 233.0M451.5 146.0L1914.0 569.1M1067.9 979.0L1914.0 245.0M475.4 146.0L1914.0 562.2M1081.7 979.0L1914.0 257.0M499.4 146.0L1914.0 555.2M1095.5 979.0L1914.0 269.0M523.3 146.0L1914.0 548.3M1109.4 979.0L1914.0 280.9M547.2 146.0L1914.0 541.4M1123.2 979.0L1914.0 292.9M571.2 146.0L1914.0 534.5M1137.0 979.0L1914.0 304.9M595.1 146.0L1914.0 527.5M1150.8 979.0L1914.0 316.9M619.0 146.0L1914.0 520.6M1164.7 979.0L1914.0 328.9M643.0 146.0L1914.0 513.7M1178.5 979.0L1914.0 340.9M666.9 146.0L1914.0 506.8M1192.3 979.0L1914.0 352.9M690.9 146.0L1914.0 499.9M1206.2 979.0L1914.0 364.9M714.8 146.0L1914.0 492.9M1220.0 979.0L1914.0 376.9M738.7 146.0L1914.0 486.0M1233.8 979.0L1914.0 388.9M762.7 146.0L1914.0 479.1M1247.6 979.0L1914.0 400.9M786.6 146.0L1914.0 472.2M1261.5 979.0L1914.0 412.9M810.5 146.0L1914.0 465.2M1275.3 979.0L1914.0 424.9M834.5 146.0L1914.0 458.3M1289.1 979.0L1914.0 436.9M858.4 146.0L1914.0 451.4M1302.9 979.0L1914.0 448.9M882.3 146.0L1914.0 444.5M1316.8 979.0L1914.0 460.9M906.3 146.0L1914.0 437.5M1330.6 979.0L1914.0 472.9M930.2 146.0L1914.0 430.6M1344.4 979.0L1914.0 484.9M954.2 146.0L1914.0 423.7M1358.3 979.0L1914.0 496.9M978.1 146.0L1914.0 416.8M1372.1 979.0L1914.0 508.9M1002.0 146.0L1914.0 409.8M1385.9 979.0L1914.0 520.9M1026.0 146.0L1914.0 402.9M1399.7 979.0L1914.0 532.9M1049.9 146.0L1914.0 396.0M1413.6 979.0L1914.0 544.9M1073.8 146.0L1914.0 389.1M1427.4 979.0L1914.0 556.9M1097.8 146.0L1914.0 382.1M1441.2 979.0L1914.0 568.9M1121.7 146.0L1914.0 375.2M1455.1 979.0L1914.0 580.9M1145.7 146.0L1914.0 368.3M1468.9 979.0L1914.0 592.9M1169.6 146.0L1914.0 361.4M1482.7 979.0L1914.0 604.8M1193.5 146.0L1914.0 354.4M1496.5 979.0L1914.0 616.8M1217.5 146.0L1914.0 347.5M1510.4 979.0L1914.0 628.8M1241.4 146.0L1914.0 340.6M1524.2 979.0L1914.0 640.8M1265.3 146.0L1914.0 333.7M1538.0 979.0L1914.0 652.8M1289.3 146.0L1914.0 326.7M1551.9 979.0L1914.0 664.8M1313.2 146.0L1914.0 319.8M1565.7 979.0L1914.0 676.8M1337.1 146.0L1914.0 312.9M1579.5 979.0L1914.0 688.8M1361.1 146.0L1914.0 306.0M1593.3 979.0L1914.0 700.8M1385.0 146.0L1914.0 299.0M1607.2 979.0L1914.0 712.8M1409.0 146.0L1914.0 292.1M1621.0 979.0L1914.0 724.8M1432.9 146.0L1914.0 285.2M1634.8 979.0L1914.0 736.8M1456.8 146.0L1914.0 278.3M1648.7 979.0L1914.0 748.8M1480.8 146.0L1914.0 271.3M1662.5 979.0L1914.0 760.8M1504.7 146.0L1914.0 264.4M1676.3 979.0L1914.0 772.8M1528.6 146.0L1914.0 257.5M1690.1 979.0L1914.0 784.8M1552.6 146.0L1914.0 250.6M1704.0 979.0L1914.0 796.8M1576.5 146.0L1914.0 243.6M1717.8 979.0L1914.0 808.8M1600.4 146.0L1914.0 236.7M1731.6 979.0L1914.0 820.8M1624.4 146.0L1914.0 229.8M1745.4 979.0L1914.0 832.8M1648.3 146.0L1914.0 222.9M1759.3 979.0L1914.0 844.8M1672.3 146.0L1914.0 215.9M1773.1 979.0L1914.0 856.8M1696.2 146.0L1914.0 209.0M1786.9 979.0L1914.0 868.8M1720.1 146.0L1914.0 202.1M1800.8 979.0L1914.0 880.8M1744.1 146.0L1914.0 195.2M1814.6 979.0L1914.0 892.8M1768.0 146.0L1914.0 188.2M1828.4 979.0L1914.0 904.8M1791.9 146.0L1914.0 181.3M1842.2 979.0L1914.0 916.7M1815.9 146.0L1914.0 174.4M1856.1 979.0L1914.0 928.7M1839.8 146.0L1914.0 167.5M1869.9 979.0L1914.0 940.7M1863.7 146.0L1914.0 160.5M1883.7 979.0L1914.0 952.7M1887.7 146.0L1914.0 153.6M1897.6 979.0L1914.0 964.7M1911.6 146.0L1914.0 146.7M1911.4 979.0L1914.0 976.7" stroke="#8c8c98" stroke-opacity="0.065" stroke-width="1" fill="none"/><path d="M242.0 320.8L1914.0 804.5" stroke="#ff0000" stroke-opacity="0.07" stroke-width="1" fill="none"/><path d="M597.7 979.0L1557.9 146.0" stroke="#00a000" stroke-opacity="0.05" stroke-width="1" fill="none"/><path d="M593.0 623.2L1215.2 803.2M597.4 631.4L956.5 319.8M599.0 618.0L1221.2 798.0M607.8 634.4L966.9 322.8M605.0 612.8L1227.2 792.8M618.1 637.4L977.3 325.8M611.0 607.6L1233.2 787.6M628.5 640.4L987.7 328.8M617.0 602.4L1239.1 782.4M638.9 643.4L998.0 331.8M622.9 597.2L1245.1 777.2M649.2 646.4L1008.4 334.8M628.9 592.0L1251.1 772.0M659.6 649.4L1018.8 337.8M634.9 586.8L1257.1 766.8M670.0 652.4L1029.1 340.8M640.9 581.7L1263.1 761.7M680.4 655.4L1039.5 343.8M652.9 571.3L1275.1 751.3M701.1 661.4L1060.2 349.8M658.9 566.1L1281.1 746.1M711.5 664.4L1070.6 352.8M664.8 560.9L1287.0 740.9M721.8 667.4L1081.0 355.8M670.8 555.7L1293.0 735.7M732.2 670.4L1091.4 358.8M676.8 550.5L1299.0 730.5M742.6 673.4L1101.7 361.8M682.8 545.3L1305.0 725.3M752.9 676.4L1112.1 364.8M688.8 540.1L1311.0 720.1M763.3 679.4L1122.5 367.8M694.8 534.9L1317.0 714.9M773.7 682.4L1132.8 370.8M700.8 529.7L1323.0 709.7M784.1 685.4L1143.2 373.8M712.7 519.3L1334.9 699.3M804.8 691.4L1164.0 379.8M718.7 514.1L1340.9 694.1M815.2 694.4L1174.3 382.8M724.7 509.0L1346.9 689.0M825.5 697.4L1184.7 385.8M730.7 503.8L1352.9 683.8M835.9 700.4L1195.1 388.8M736.7 498.6L1358.9 678.6M846.3 703.4L1205.4 391.8M742.7 493.4L1364.9 673.4M856.6 706.4L1215.8 394.8M748.6 488.2L1370.8 668.2M867.0 709.4L1226.2 397.8M754.6 483.0L1376.8 663.0M877.4 712.4L1236.5 400.8M760.6 477.8L1382.8 657.8M887.8 715.4L1246.9 403.8M772.6 467.4L1394.8 647.4M908.5 721.4L1267.6 409.8M778.6 462.2L1400.8 642.2M918.9 724.4L1278.0 412.8M784.6 457.0L1406.8 637.0M929.2 727.4L1288.4 415.8M790.5 451.8L1412.7 631.8M939.6 730.4L1298.8 418.8M796.5 446.6L1418.7 626.6M950.0 733.4L1309.1 421.8M802.5 441.4L1424.7 621.4M960.3 736.4L1319.5 424.8M808.5 436.2L1430.7 616.2M970.7 739.4L1329.9 427.8M814.5 431.1L1436.7 611.1M981.1 742.4L1340.2 430.8M820.5 425.9L1442.7 605.9M991.5 745.4L1350.6 433.8M832.4 415.5L1454.6 595.5M1012.2 751.4L1371.3 439.8M838.4 410.3L1460.6 590.3M1022.6 754.4L1381.7 442.8M844.4 405.1L1466.6 585.1M1032.9 757.4L1392.1 445.8M850.4 399.9L1472.6 579.9M1043.3 760.4L1402.5 448.8M856.4 394.7L1478.6 574.7M1053.7 763.4L1412.8 451.8M862.4 389.5L1484.6 569.5M1064.0 766.4L1423.2 454.8M868.4 384.3L1490.6 564.3M1074.4 769.4L1433.6 457.8M874.3 379.1L1496.5 559.1M1084.8 772.4L1443.9 460.8M880.3 373.9L1502.5 553.9M1095.2 775.4L1454.3 463.8M892.3 363.5L1514.5 543.5M1115.9 781.4L1475.0 469.8M898.3 358.4L1520.5 538.4M1126.3 784.4L1485.4 472.8M904.3 353.2L1526.5 533.2M1136.6 787.4L1495.8 475.8M910.3 348.0L1532.5 528.0M1147.0 790.4L1506.2 478.8M916.3 342.8L1538.5 522.8M1157.4 793.4L1516.5 481.8M922.2 337.6L1544.4 517.6M1167.7 796.4L1526.9 484.8M928.2 332.4L1550.4 512.4M1178.1 799.4L1537.3 487.8M934.2 327.2L1556.4 507.2M1188.5 802.4L1547.6 490.8M940.2 322.0L1562.4 502.0M1198.9 805.4L1558.0 493.8" stroke="#7c7cb8" stroke-opacity="0.29" stroke-width="1.150" fill="none"/><path d="M646.9 576.5L1269.1 756.5M690.7 658.4L1049.9 346.8M706.7 524.5L1328.9 704.5M794.4 688.4L1153.6 376.8M826.5 420.7L1448.7 600.7M1001.8 748.4L1361.0 436.8M886.3 368.7L1508.5 548.7M1105.5 778.4L1464.7 466.8" stroke="#7070b0" stroke-opacity="0.50" stroke-width="1.150" fill="none"/><path d="M733.9 463.2L1421.5 662.0" stroke="#ff2222" stroke-width="1.500" stroke-dasharray="14.600 3 3.400 3" stroke-dashoffset="1.200" fill="none"/><path d="M879.3 734.7L1276.1 390.5" stroke="#2a9c2a" stroke-width="1.350" stroke-dasharray="14.600 3.100 2.800 3.500" stroke-dashoffset="0.700" fill="none"/><path d="M1077.700 562.600 V537" stroke="#7aa0f0" stroke-width="2" opacity="0.85"/><path d="M1077.900 520 L1081.300 537.400 H1074.500 Z" fill="#3a6be0"/>
<path d="M1077.700 562.600 L1092 549.400" stroke="#2c9a2c" stroke-width="2"/><path d="M1106.400 537.500 L1094.200 552.200 L1090.200 547.400 Z" fill="#0f7d0f"/>
<path d="M1077.700 562.600 L1103 570" stroke="#ff3030" stroke-width="2"/><path d="M1121.400 575 L1102.200 573.800 L1103.800 567.400 Z" fill="#f01010"/>
<rect x="1075.700" y="560.600" width="4" height="4" fill="#8a8a8a"/></svg>
</div>
<div class="t b" style="left:1074.5px;top:503.5px;transform:scaleX(1);color:#4a4ae8;font-size:9px;will-change:transform;">Z</div>
<div class="t b" style="left:1104.3px;top:528.6px;transform:scaleX(1);color:#2c8a2c;font-size:9.500px;will-change:transform;">Y</div>
<div class="t b" style="left:1126.3px;top:570px;transform:scaleX(1);color:#f03030;font-size:9.500px;will-change:transform;">X</div>
<div class="a b logo" style="left:1785.800px;top:168.200px;font-size:35.500px;line-height:44px;color:#4c4c4c;white-space:nowrap;-webkit-text-stroke:0.500px #4c4c4c;transform:scaleX(0.993);transform-origin:0 0;">Ansys</div>
<div class="a b" style="left:1834.500px;top:213px;font-size:18px;line-height:20px;color:#4c4c4c;white-space:nowrap;transform:scaleX(0.957);transform-origin:0 0;">2022 R1</div>
<div class="a" style="left:1008px;top:943px;width:32px;height:32px;background:#fff;box-sizing:border-box;border:1px solid #5a5a5a;border-radius:5px;"></div>
<div class="a" style="left:1044px;top:943px;width:32px;height:32px;background:#fff;box-sizing:border-box;border:1px solid #5a5a5a;border-radius:5px;"></div>
<div class="a" style="left:1080px;top:943px;width:32px;height:32px;background:#fff;box-sizing:border-box;border:1px solid #5a5a5a;border-radius:5px;"></div>
<div class="a" style="left:1116px;top:943px;width:32px;height:32px;background:#fff;box-sizing:border-box;border:1px solid #5a5a5a;border-radius:5px;"></div>
<svg style="left:0px;top:0px" width="1914" height="1028" viewBox="0 0 1914 1028"><path d="M1018.500 955.500 L1024.500 953 L1030 955 L1024 957.500 Z" fill="#8be28b" stroke="#1e6a1e" stroke-width="0.8"/><path d="M1018.500 955.500 L1024 957.500 V966 L1018.500 963.500 Z" fill="#9aea9a" stroke="#1e6a1e" stroke-width="0.8"/><path d="M1024 957.500 L1030 955 V963.500 L1024 966 Z" fill="#3fae3f" stroke="#1e6a1e" stroke-width="0.8"/>
<rect x="1054" y="953.500" width="11.500" height="11.500" fill="#fff" stroke="#3a3a6a" stroke-width="0.8"/><path d="M1057.800 953.500 v11.500 M1061.600 953.500 v11.500 M1054 957.300 h11.500 M1054 961.100 h11.500" stroke="#3a3a6a" stroke-width="0.700"/><rect x="1061.600" y="961.100" width="3.900" height="3.900" fill="#3a3a8a"/>
<path d="M1053.500 966.500 L1055 962.500 L1064.500 952.300 Q1066.500 951.300 1067.300 953.500 L1057.500 964 Z" fill="#f2c62a" stroke="#5a4a10" stroke-width="0.700"/><path d="M1064.500 952.300 Q1066.500 951.300 1067.300 953.500 L1066.100 954.800 L1063.500 953.100 Z" fill="#e05a5a"/>
<path d="M1088.500 966 L1093 958 H1103 L1098.500 966 Z" fill="#fff" stroke="#333" stroke-width="0.900"/><path d="M1096 951 L1098.300 959 H1093.700 Z" fill="#7ab8f0" stroke="#2a5a9a" stroke-width="0.700"/><path d="M1096 959 V963" stroke="#2a5a9a" stroke-width="1.200"/>
<path d="M1124 955.600 Q1132 950.800 1140 955.600 Q1132 960.400 1124 955.600 Z" fill="#fff" stroke="#000" stroke-width="1"/><circle cx="1132" cy="955.600" r="2.400" fill="#5fb4c8" stroke="#1e5a6e" stroke-width="0.900"/>
<path d="M1126 953 l-1 -1.400 M1129 952 l-0.400 -1.500 M1132 951.700 v-1.500 M1135 952 l0.400 -1.500 M1138 953 l1 -1.400" stroke="#000" stroke-width="0.800"/>
<rect x="1126.500" y="959.500" width="12.500" height="7" fill="#2f2f72"/><path d="M1127.800 960.800 h2v1.800h-2z m3 0 h2v1.800h-2z m3 0 h2v1.800h-2z m3 0 h1.700v1.800h-1.700z M1127.800 963.800 h2v1.700h-2z m3 0 h2v1.700h-2z m3 0 h2v1.700h-2z m3 0 h1.700v1.700h-1.700z" fill="#eef"/>
<path d="M301 904.500 V897" stroke="#0000ff" stroke-width="2.200"/><path d="M301 887.400 L304.400 898.800 H297.600 Z" fill="#0000ff"/>
<path d="M287.100 913 L297.600 906.400 L313.400 909.900 L305.500 917.300 Z" fill="#e6eefa" stroke="#f3f7fd" stroke-width="0.700"/>
<path d="M287.100 913 L305.500 917.300 L304.600 935.300 L288 929.100 Z" fill="#e2eaf8" stroke="#f3f7fd" stroke-width="0.700"/>
<path d="M305.500 917.300 L313.400 909.900 L313.400 925.600 L304.600 935.300 Z" fill="#c6d2ea" stroke="#dfe7f5" stroke-width="0.700"/>
<ellipse cx="301" cy="910.300" rx="3.900" ry="3" fill="#0000ff"/><circle cx="295.400" cy="924.800" r="3.900" fill="#0a8a0a"/><ellipse cx="310.300" cy="922.600" rx="2.900" ry="4" fill="#ff0a0a"/>
<path d="M316.500 924.300 L323 926.100" stroke="#ff0a0a" stroke-width="2"/><path d="M332.400 928.800 L321.200 929 L322.600 923.200 Z" fill="#ff0a0a"/></svg>
<div class="t b" style="left:297.5px;top:872.3px;transform:scaleX(1.05);color:#0000ff;font-size:10.500px;will-change:transform;">Z</div>
<div class="t b" style="left:312px;top:899.8px;transform:scaleX(1.05);color:#0a8a0a;font-size:10.500px;will-change:transform;">Y</div>
<div class="t b" style="left:336.5px;top:923.8px;transform:scaleX(1.05);color:#ff0a0a;font-size:10.500px;will-change:transform;">X</div>
<!-- status -->
<div class="a" style="left:240px;top:981px;width:1674px;height:1px;background:#fff;"></div>
<div class="a" style="left:240px;top:982px;width:1674px;height:1px;background:#7c7c7c;"></div>
<div class="a" style="left:240px;top:983px;width:1674px;height:24px;background:#f7f7fb;"></div>
<div class="a" style="left:243px;top:982px;width:80px;height:1px;background:#c4c4c4;"></div>
<div class="a" style="left:243px;top:983px;width:80px;height:21px;background:#f7f7fb;box-sizing:border-box;border:1px solid #2D5C88;border-top:none;"></div>
<div class="t b bl" style="left:266px;top:987px;transform:scaleX(0.875);">Design1</div>
<div class="a" style="left:0px;top:1006px;width:1914px;height:1px;background:#eef0f5;"></div>
<div class="a" style="left:0px;top:1007px;width:1914px;height:21px;background:#2D5C88;"></div>
<div class="t w" style="left:7px;top:1017px;">Ready</div>
<svg style="left:0px;top:0px" width="1914" height="1028" viewBox="0 0 1914 1028"><g stroke="#4a2a10" stroke-width="0.800" stroke-linejoin="round"><path d="M247.400 989.500 L252.600 991.900 V994.500 L256.300 997 V1000.800 L247.900 996.400 Z" fill="#fbe3c4"/>
<path d="M247.400 989.500 L253.800 985.100 L258.900 987.300 L252.600 991.900 Z" fill="#fde9cf"/><path d="M252.600 991.900 L258.900 987.300 V990.600 L252.600 994.500 Z" fill="#e9b988"/>
<path d="M252.600 994.500 L258.900 990.600 L262.600 993.900 L256.300 997 Z" fill="#fbe0bd"/><path d="M256.300 997 L262.600 993.900 V997.600 L256.300 1000.800 Z" fill="#e2ae7c"/></g>
<path d="M310.800 990.300 L317.300 996 M317.300 990.300 L310.800 996" stroke="#555" stroke-width="1.400"/>
<path d="M1882.500 988.500 L1878 992.500 L1882.500 996.500 Z M1892.500 988.500 L1897 992.500 L1892.500 996.500 Z" fill="none" stroke="#333" stroke-width="0.900"/><path d="M1905.300 989.300 L1912.500 996 M1912.500 989.300 L1905.300 996" stroke="#333" stroke-width="1.300"/>
<rect x="1072.9" y="1012.300" width="1.200" height="16" fill="#8ea4ba"/>
<rect x="1225.9" y="1012.300" width="1.200" height="16" fill="#8ea4ba"/>
<rect x="1261.9" y="1012.300" width="1.200" height="16" fill="#8ea4ba"/>
<rect x="1414.9" y="1012.300" width="1.200" height="16" fill="#8ea4ba"/>
<rect x="1754.9" y="1012.300" width="1.200" height="16" fill="#8ea4ba"/>
<path d="M1231.500 1028 L1238.500 1018 L1245.500 1028 Z" fill="#a9bacb"/><path d="M1250.500 1025.500 L1254 1022 L1257.500 1025.500 Z" fill="#d4dde7"/>
<path d="M1646.500 1020.800 L1652 1015.700 L1657.500 1020.800 Z" fill="#7c94ad"/><rect x="1647" y="1026.300" width="10" height="1.700" fill="#7c94ad"/>
<path d="M1665.500 1018 V1029 L1668.500 1026.500 L1670.500 1029 H1672.500 L1671 1026 L1675 1025.500 Z" fill="#a9b6c4" stroke="#44586c" stroke-width="0.600"/><path d="M1675 1028 Q1682.500 1024 1678.500 1018.500" fill="none" stroke="#90a4b8" stroke-width="1.800"/><path d="M1674.500 1017 L1680.500 1016.200 L1679 1021.500 Z" fill="#90a4b8"/>
<path d="M1692.300 1017.200 V1029 H1699 L1697.500 1026.300 L1701.600 1025.800 Z" fill="#fff" stroke="#1c1c1c" stroke-width="0.800"/>
<path d="M1708.800 1026.200 L1712.300 1022.200 L1715.800 1026.200 Z M1744.200 1026.200 L1747.700 1022.200 L1751.200 1026.200 Z M1780.100 1026.200 L1783.600 1022.200 L1787.100 1026.200 Z M1838.600 1026.200 L1842.100 1022.200 L1845.600 1026.200 Z" fill="#f2f5f8"/>
<path d="M1725.500 1029 V1019.600 H1738.500 V1029" fill="none" stroke="#62b2f6" stroke-width="2" stroke-dasharray="3.600 2.400" stroke-dashoffset="1.200"/>
<path d="M1768 1017.500 V1022 M1761.500 1027 L1766.500 1023.500 M1774.500 1027 L1769.500 1023.500" stroke="#62b2f6" stroke-width="1.800" fill="none"/><path d="M1763.500 1022 a5.500 5 0 0 1 9 0 M1762 1024 q-1.500 3 0 5 M1774 1024 q1.500 3 0 5" stroke="#62b2f6" stroke-width="1.600" fill="none"/><path d="M1765.800 1018.800 L1768 1016.600 L1770.200 1018.800 Z" fill="#62b2f6"/>
<path d="M1796.500 1024.300 h13 M1803 1018 v10.500" fill="none" stroke="#62b2f6" stroke-width="1.900"/><path d="M1799 1021.500 L1795.600 1024.300 L1799 1027.100 Z M1807 1021.500 L1810.400 1024.300 L1807 1027.100 Z M1800.200 1020 L1803 1016.800 L1805.800 1020 Z" fill="#62b2f6"/>
<circle cx="1825.400" cy="1022.900" r="5.600" fill="#fff" stroke="#62b2f6" stroke-width="1.800"/><path d="M1829.500 1027 L1832 1029" stroke="#62b2f6" stroke-width="2.400"/>
<path d="M1855 1028 L1869 1020.500" fill="none" stroke="#6f89a4" stroke-width="3"/><path d="M1854.500 1024.500 L1861 1023 L1857.500 1028.500 Z" fill="#6f89a4"/>
<path d="M1878 1028 L1890 1021.500" fill="none" stroke="#6f89a4" stroke-width="3"/><path d="M1886 1018.500 L1894.500 1018.800 L1890.500 1025.500 Z" fill="#6f89a4"/></svg>
</body></html>
